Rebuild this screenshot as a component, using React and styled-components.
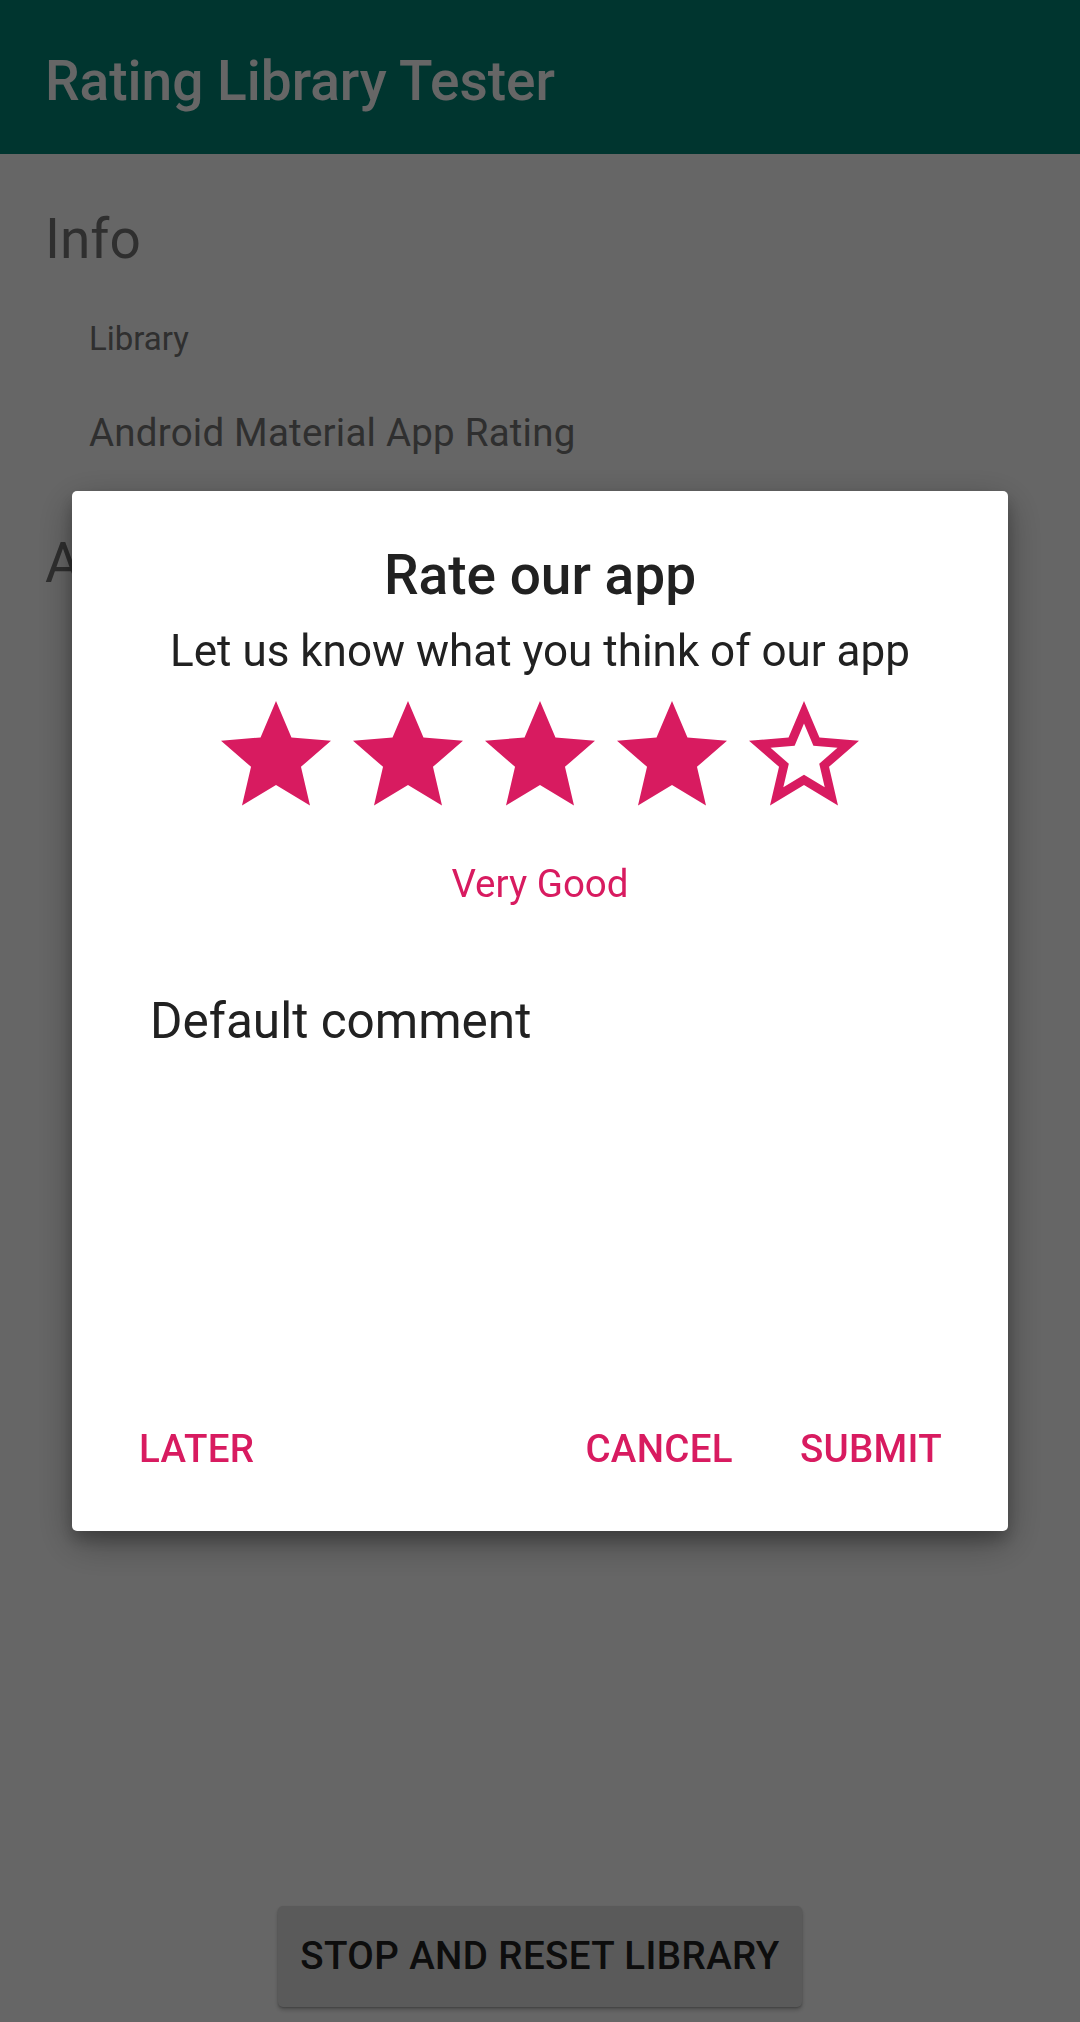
import React from "react";
import styled, { createGlobalStyle } from "styled-components";

const GlobalStyle = createGlobalStyle`
  html, body {
    margin: 0;
    padding: 0;
    background: #ffffff;
    font-family: Roboto, "Noto Sans", "Liberation Sans", sans-serif;
  }
  * { box-sizing: border-box; }
`;

const Page = styled.div`
  min-height: 100vh;
  display: flex;
  flex-direction: column;
  background: #ffffff;
`;

const Toolbar = styled.header`
  height: 154px;
  background: #008577;
  padding: 54px 45px 0;
`;

const ToolbarTitle = styled.h1`
  margin: 0;
  font-size: 55px;
  font-weight: 500;
  line-height: 1;
  color: #ffffff;
`;

const Content = styled.main`
  display: flex;
  flex-direction: column;
  padding: 0 45px;
`;

const SectionTitle = styled.h2`
  margin: ${(p) => p.$top}px 0 0;
  font-size: 55px;
  font-weight: 400;
  line-height: 1;
  color: #757575;
`;

const FieldLabel = styled.div`
  margin-top: 55.5px;
  padding-left: 44px;
  font-size: 33px;
  line-height: 1;
  color: #757575;
`;

const FieldValue = styled.div`
  margin-top: 58.4px;
  padding-left: 44px;
  font-size: 38.5px;
  letter-spacing: 0.22px;
  line-height: 1;
  color: #757575;
`;

const ResetButton = styled.button`
  margin: auto auto 15px;
  height: 101px;
  padding: 0 22px;
  border: none;
  border-radius: 5px;
  background: #e0e0e0;
  box-shadow: 0 3px 4px rgba(0, 0, 0, 0.22), 0 1px 2px rgba(0, 0, 0, 0.2);
  font-family: inherit;
  font-size: 38.5px;
  font-weight: 500;
  letter-spacing: 0.4px;
  line-height: 1;
  color: #212121;
  text-transform: uppercase;
`;

const Scrim = styled.div`
  position: fixed;
  inset: 0;
  background: rgba(0, 0, 0, 0.6);
  display: flex;
  align-items: center;
  justify-content: center;
`;

const Dialog = styled.div`
  width: 936px;
  background: #ffffff;
  border-radius: 5px;
  box-shadow: 0 12px 38px rgba(0, 0, 0, 0.32), 0 9px 16px rgba(0, 0, 0, 0.22);
  display: flex;
  flex-direction: column;
  align-items: stretch;
  padding: 57px 0 62.9px;
`;

const DialogTitle = styled.h2`
  margin: 0;
  text-align: center;
  font-size: 55px;
  font-weight: 500;
  line-height: 1;
  color: #212121;
`;

const DialogSubtitle = styled.p`
  margin: 26px 0 0;
  text-align: center;
  font-size: 44px;
  line-height: 1;
  color: #212121;
`;

const Stars = styled.div`
  margin-top: 17px;
  display: flex;
  justify-content: center;
`;

const StarIcon = styled.svg`
  width: 132px;
  height: 132px;
  display: block;
  fill: #d81b60;
`;

const RatingNote = styled.div`
  margin-top: 42.6px;
  text-align: center;
  font-size: 38.5px;
  line-height: 1;
  color: #d81b60;
`;

const Comment = styled.textarea`
  margin: 94.2px 80px 0 78px;
  height: 332px;
  padding: 0;
  border: none;
  outline: none;
  resize: none;
  background: transparent;
  font-family: inherit;
  font-size: 49.5px;
  line-height: 1;
  color: #212121;
  overflow: hidden;
`;

const ButtonBar = styled.div`
  margin-top: 100.3px;
  display: flex;
  align-items: center;
  padding: 0 66px 0 67px;
`;

const Spacer = styled.div`
  flex: 1;
`;

const TextButton = styled.button`
  margin: 0 ${(p) => p.$gap || 0}px 0 0;
  padding: 0;
  border: none;
  background: none;
  font-family: inherit;
  font-size: 38.5px;
  font-weight: 500;
  letter-spacing: 0.3px;
  line-height: 1;
  color: #d81b60;
  text-transform: uppercase;
`;

const FILLED =
  "M12 17.27L18.18 21l-1.64-7.03L22 9.24l-7.19-.61L12 2 9.19 8.63 2 9.24l5.46 4.73L5.82 21z";
const BORDER =
  "M22 9.24l-7.19-.62L12 2 9.19 8.63 2 9.24l5.46 4.73L5.82 21 12 17.27 18.18 21l-1.63-7.03L22 9.24zM12 15.4l-3.76 2.27 1-4.28-3.32-2.88 4.38-.38L12 6.1l1.71 4.04 4.38.38-3.32 2.88 1 4.28L12 15.4z";

function Star({ filled }) {
  return (
    <StarIcon viewBox="0 0 24 24" aria-hidden="true">
      <path d={filled ? FILLED : BORDER} />
    </StarIcon>
  );
}

export default function App() {
  const rating = 4;
  return (
    <>
      <GlobalStyle />
      <Page>
        <Toolbar>
          <ToolbarTitle>Rating Library Tester</ToolbarTitle>
        </Toolbar>
        <Content>
          <SectionTitle $top={57.7}>Info</SectionTitle>
          <FieldLabel>Library</FieldLabel>
          <FieldValue>Android Material App Rating</FieldValue>
          <SectionTitle $top={83.6}>Actions</SectionTitle>
        </Content>
        <ResetButton>Stop and reset library</ResetButton>
      </Page>
      <Scrim>
        <Dialog role="dialog">
          <DialogTitle>Rate our app</DialogTitle>
          <DialogSubtitle>Let us know what you think of our app</DialogSubtitle>
          <Stars>
            {[1, 2, 3, 4, 5].map((n) => (
              <Star key={n} filled={n <= rating} />
            ))}
          </Stars>
          <RatingNote>Very Good</RatingNote>
          <Comment defaultValue="Default comment" />
          <ButtonBar>
            <TextButton>Later</TextButton>
            <Spacer />
            <TextButton $gap={67}>Cancel</TextButton>
            <TextButton>Submit</TextButton>
          </ButtonBar>
        </Dialog>
      </Scrim>
    </>
  );
}
